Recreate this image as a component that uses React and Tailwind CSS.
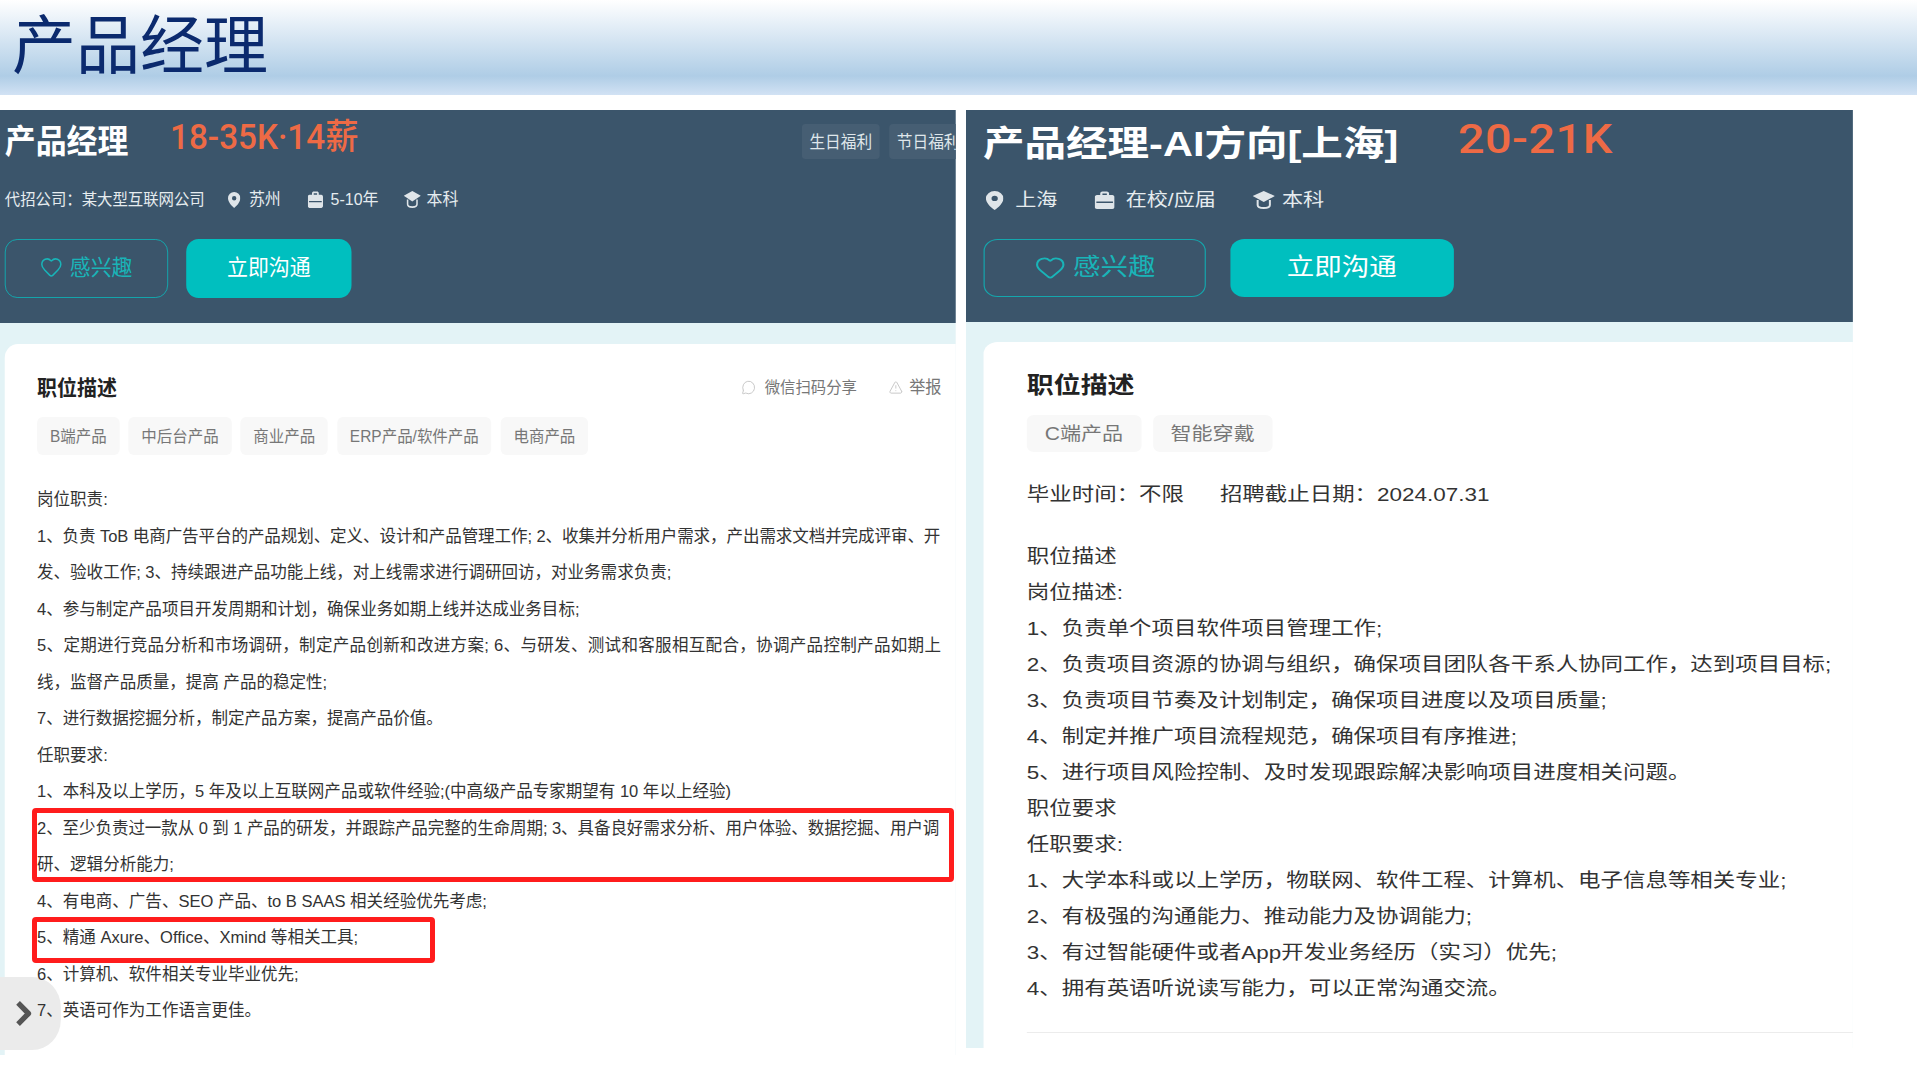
import React from "react";
import { Heart, MessageCircle, TriangleAlert } from "lucide-react";

const Pin = ({ c }) => (
  <svg viewBox="0 0 14 18" preserveAspectRatio="none" className={c}>
    <path fill="#dfe5e9" fillRule="evenodd" d="M7 0a7 7 0 0 1 7 7c0 4-4 8.500-7 11-3-2.500-7-7-7-11a7 7 0 0 1 7-7zm0 4.500a2.500 2.500 0 1 0 0 5 2.500 2.500 0 0 0 0-5z" />
  </svg>
);
const Bag = ({ c }) => (
  <svg viewBox="0 0 18 18" preserveAspectRatio="none" className={c}>
    <path fill="#dfe5e9" fillRule="evenodd" d="M5 4V2.500C5 1.200 6 .5 7 .5h4c1 0 2 .7 2 2V4h3c1 0 2 1 2 2v10c0 1-1 2-2 2H2c-1 0-2-1-2-2V6c0-1 1-2 2-2zm2 0h4V2.500H7zM1.500 10.500v1.500h15v-1.500z" />
  </svg>
);
const Cap = ({ c }) => (
  <svg viewBox="0 0 20 18" preserveAspectRatio="none" className={c}>
    <path fill="#dfe5e9" d="M10 0l10 5-10 6L0 5z" />
    <path fill="none" stroke="#dfe5e9" strokeWidth="1.800" d="M4.500 9v5c0 2 2.500 3 5.500 3s5.500-1 5.500-3V9" />
  </svg>
);

const leftLines = [
  { t: "岗位职责:" },
  { t: "1、负责 ToB 电商广告平台的产品规划、定义、设计和产品管理工作; 2、收集并分析用户需求，产出需求文档并完成评审、开", c: "tracking-[-0.08px]" },
  { t: "发、验收工作; 3、持续跟进产品功能上线，对上线需求进行调研回访，对业务需求负责;" },
  { t: "4、参与制定产品项目开发周期和计划，确保业务如期上线并达成业务目标;" },
  { t: "5、定期进行竞品分析和市场调研，制定产品创新和改进方案; 6、与研发、测试和客服相互配合，协调产品控制产品如期上", c: "tracking-[0.33px]" },
  { t: "线，监督产品质量，提高 产品的稳定性;" },
  { t: "7、进行数据挖掘分析，制定产品方案，提高产品价值。" },
  { t: "任职要求:" },
  { t: "1、本科及以上学历，5 年及以上互联网产品或软件经验;(中高级产品专家期望有 10 年以上经验)" },
  { t: "2、至少负责过一款从 0 到 1 产品的研发，并跟踪产品完整的生命周期; 3、具备良好需求分析、用户体验、数据挖掘、用户调", c: "tracking-[-0.08px]" },
  { t: "研、逻辑分析能力;" },
  { t: "4、有电商、广告、SEO 产品、to B SAAS 相关经验优先考虑;" },
  { t: "5、精通 Axure、Office、Xmind 等相关工具;" },
  { t: "6、计算机、软件相关专业毕业优先;" },
  { t: "7、英语可作为工作语言更佳。" },
];
const rightLines = [
  "职位描述",
  "岗位描述:",
  "1、负责单个项目软件项目管理工作;",
  "2、负责项目资源的协调与组织，确保项目团队各干系人协同工作，达到项目目标;",
  "3、负责项目节奏及计划制定，确保项目进度以及项目质量;",
  "4、制定并推广项目流程规范，确保项目有序推进;",
  "5、进行项目风险控制、及时发现跟踪解决影响项目进度相关问题。",
  "职位要求",
  "任职要求:",
  "1、大学本科或以上学历，物联网、软件工程、计算机、电子信息等相关专业;",
  "2、有极强的沟通能力、推动能力及协调能力;",
  "3、有过智能硬件或者App开发业务经历（实习）优先;",
  "4、拥有英语听说读写能力，可以正常沟通交流。",
];

export default function App() {
  return (
    <div lang="zh-CN" className="relative h-[1080px] w-[1917px] overflow-hidden bg-white font-['Liberation_Sans','Noto_Sans_CJK_SC',sans-serif]">
      <header className="flex h-[95px] items-center bg-gradient-to-b from-white via-[#afcde6] via-80% to-[#d2e2f4] pb-[4px] pl-[12px]">
        <h1 className="text-[64px] font-normal leading-[72px] text-[#0b2a6e]">产品经理</h1>
      </header>

      <main className="mt-[15px] flex items-start">
        {/* left: the source picture is squeezed horizontally */}
        <div className="h-[945px] w-[956px] shrink-0 overflow-hidden">
          <section className="relative w-[1006px] origin-left scale-x-[0.95] bg-[#e3f3f6]">
            <div className="h-[213px] bg-[#3b556b] px-[5px]">
              <div className="flex h-[66px] items-start pt-[9px]">
                <h2 className="w-[132px] whitespace-nowrap text-[32.500px] font-bold leading-[46px] text-white">产品经理</h2>
                <span className="ml-[42px] mt-[-1px] font-['Roboto','Noto_Sans_CJK_SC',sans-serif] text-[35px] font-medium leading-[40px] text-[#ee6a45]">18-35K·14薪</span>
                <div className="ml-auto mr-[-5px] mt-[5px] flex w-[162px] shrink-0 gap-[10px] overflow-hidden">
                  <span className="flex h-[35px] w-[82px] shrink-0 items-center justify-center rounded-[4px] bg-[#465e73] pt-[1px] text-[16.500px] text-[#dfe6ea]">生日福利</span>
                  <span className="flex h-[35px] w-[82px] shrink-0 items-center justify-center rounded-[4px] bg-[#465e73] pt-[1px] text-[16.500px] text-[#dfe6ea]">节日福利</span>
                </div>
              </div>
              <div className="flex h-[47px] items-center text-[16.800px] text-[#e6ecef]">
                <span className="w-[235px] whitespace-nowrap text-[16.200px]">代招公司：某大型互联网公司</span>
                <Pin c="h-[16px] w-[13px]" />
                <span className="ml-[9px] w-[62px]">苏州</span>
                <Bag c="h-[17px] w-[16px]" />
                <span className="ml-[8px] w-[77px]">5-10年</span>
                <Cap c="h-[17px] w-[18px]" />
                <span className="ml-[6px]">本科</span>
              </div>
              <div className="mt-[16px] flex gap-[19px]">
                <button className="flex h-[59px] w-[172px] items-center justify-center gap-[7px] rounded-[13px] border-[1.5px] border-[#14a7ad] pb-[3px] text-[22px] text-[#19b4b8]">
                  <Heart className="h-[26px] w-[24px]" strokeWidth={1.6} />感兴趣
                </button>
                <button className="h-[59px] w-[174px] rounded-[13px] bg-[#00bfbf] pb-[3px] text-[22px] text-white">立即沟通</button>
              </div>
            </div>
            <div className="pl-[5px] pt-[21px]">
              <div className="rounded-tl-[14px] bg-white pb-[27px] pl-[34px] pr-[14px] pt-[28px]">
                <div className="flex h-[30px] items-center pt-[1px]">
                  <h3 className="text-[21px] font-bold text-[#222]">职位描述</h3>
                  <MessageCircle className="ml-auto h-[15px] w-[16px] text-[#bbb]" strokeWidth={1.3} />
                  <span className="ml-[9px] text-[16.200px] text-[#777]">微信扫码分享</span>
                  <TriangleAlert className="ml-[33px] h-[15px] w-[16px] text-[#bbb]" strokeWidth={1.3} />
                  <span className="ml-[6px] mr-[1px] text-[17px] text-[#777]">举报</span>
                </div>
                <div className="mt-[15px] flex gap-[9.500px] text-[16.300px] text-[#777]">
                  {["B端产品", "中后台产品", "商业产品", "ERP产品/软件产品", "电商产品"].map((t) => (
                    <span key={t} className="flex h-[38px] items-center rounded-[6px] bg-[#f8f8f8] px-[13.500px] pt-[1px]">{t}</span>
                  ))}
                </div>
                <div className="relative z-10 mt-[26px] text-[17.400px] leading-[36.500px] text-[#333]">
                  {leftLines.map((l) => (
                    <div key={l.t} className={l.c ? `whitespace-nowrap ${l.c}` : "whitespace-nowrap"}>{l.t}</div>
                  ))}
                </div>
              </div>
            </div>
            {/* sidebar toggle, lies under the text */}
            <div className="absolute left-0 top-[867px] flex h-[73px] w-[64px] items-center rounded-r-[30px] bg-[#ebebeb] pl-[16px]">
              <svg viewBox="0 0 18 28" preserveAspectRatio="none" className="h-[27px] w-[18px]">
                <path d="M3 3l11 11L3 25" fill="none" stroke="#555" strokeWidth="5.500" strokeLinejoin="round" />
              </svg>
            </div>
          </section>
        </div>

        {/* right: the source picture is stretched horizontally */}
        <div className="ml-[10px] w-[887px] shrink-0 overflow-hidden">
          <section className="w-[758px] origin-left scale-x-[1.17] bg-[#e3f3f6]">
            <div className="h-[212px] bg-[#3b556b] pl-[14.500px]">
              <div className="flex h-[67px] items-start pt-[9px]">
                <h2 className="w-[354px] whitespace-nowrap text-[35.500px] font-bold leading-[50px] text-white">产品经理-AI方向[上海]</h2>
                <span className="ml-[52px] mt-[-2px] font-['Roboto',sans-serif] text-[40px] font-medium leading-[46px] tracking-[0.400px] text-[#ee6a45]">20-21K</span>
              </div>
              <div className="flex h-[46px] items-center text-[18px] text-[#e6ecef]">
                <Pin c="ml-[2.500px] h-[19px] w-[15px]" />
                <span className="ml-[10px] w-[68px]">上海</span>
                <Bag c="h-[18px] w-[17px]" />
                <span className="ml-[9.500px] w-[108px] whitespace-nowrap">在校/应届</span>
                <Cap c="h-[18px] w-[19px]" />
                <span className="ml-[6.500px]">本科</span>
              </div>
              <div className="mt-[16px] flex gap-[20.500px]">
                <button className="flex h-[58px] w-[190.500px] items-center justify-center gap-[6px] rounded-[12px] border-[1.5px] border-[#14a7ad] text-[23.500px] text-[#19b4b8]">
                  <Heart className="mb-[2px] h-[27px] w-[28px]" strokeWidth={1.6} />感兴趣
                </button>
                <button className="h-[58px] w-[191.500px] rounded-[12px] bg-[#00bfbf] text-[23.500px] text-white">立即沟通</button>
              </div>
            </div>
            <div className="pl-[14.500px] pt-[20px]">
              <div className="rounded-tl-[12px] bg-white pb-[15px] pl-[37.500px] pt-[27px]">
                <div className="flex h-[30px] items-center pt-[2px]">
                  <h3 className="text-[23px] font-bold text-[#222]">职位描述</h3>
                </div>
                <div className="mt-[16px] flex gap-[10.500px] text-[18px] text-[#777]">
                  <span className="flex h-[37px] w-[97.500px] items-center justify-center rounded-[6px] bg-[#f8f8f8] pt-[1px]">C端产品</span>
                  <span className="flex h-[37px] w-[101.500px] items-center justify-center rounded-[6px] bg-[#f8f8f8] pt-[1px]">智能穿戴</span>
                </div>
                <div className="mt-[25px] flex h-[36px] items-center text-[19.200px] text-[#333]">
                  <span className="w-[165px] whitespace-nowrap">毕业时间：不限</span>
                  <span className="whitespace-nowrap">招聘截止日期：2024.07.31</span>
                </div>
                <div className="mt-[26px] text-[19.200px] leading-[36px] text-[#333]">
                  {rightLines.map((l) => (
                    <div key={l} className="whitespace-nowrap">{l}</div>
                  ))}
                </div>
                <div className="mt-[25px] h-px bg-[#ececec]" />
              </div>
            </div>
          </section>
        </div>
      </main>

      {/* red annotation boxes */}
      <div className="absolute left-[32px] top-[808px] h-[74px] w-[922px] rounded-[4px] border-[5px] border-[#ff1c1c]" />
      <div className="absolute left-[32px] top-[917px] h-[46px] w-[403px] rounded-[4px] border-[5px] border-[#ff1c1c]" />
    </div>
  );
}
